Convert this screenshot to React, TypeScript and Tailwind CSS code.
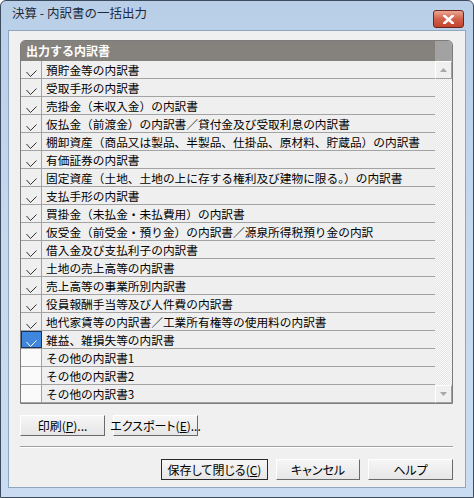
import React from "react";

const items: { label: string; checked: boolean; selected?: boolean }[] = [
  { label: "預貯金等の内訳書", checked: true },
  { label: "受取手形の内訳書", checked: true },
  { label: "売掛金（未収入金）の内訳書", checked: true },
  { label: "仮払金（前渡金）の内訳書／貸付金及び受取利息の内訳書", checked: true },
  { label: "棚卸資産（商品又は製品、半製品、仕掛品、原材料、貯蔵品）の内訳書", checked: true },
  { label: "有価証券の内訳書", checked: true },
  { label: "固定資産（土地、土地の上に存する権利及び建物に限る。）の内訳書", checked: true },
  { label: "支払手形の内訳書", checked: true },
  { label: "買掛金（未払金・未払費用）の内訳書", checked: true },
  { label: "仮受金（前受金・預り金）の内訳書／源泉所得税預り金の内訳", checked: true },
  { label: "借入金及び支払利子の内訳書", checked: true },
  { label: "土地の売上高等の内訳書", checked: true },
  { label: "売上高等の事業所別内訳書", checked: true },
  { label: "役員報酬手当等及び人件費の内訳書", checked: true },
  { label: "地代家賃等の内訳書／工業所有権等の使用料の内訳書", checked: true },
  { label: "雑益、雑損失等の内訳書", checked: true, selected: true },
  { label: "その他の内訳書1", checked: false },
  { label: "その他の内訳書2", checked: false },
  { label: "その他の内訳書3", checked: false },
];

const font = { fontFamily: '"Noto Sans CJK JP", "Liberation Sans", sans-serif' };

function Check({ color }: { color: string }) {
  return (
    <svg width="11" height="7" viewBox="0 0 11 7" className="absolute left-[5px] top-[9px]">
      <polyline points="0.5,2 4.5,6.5 10.5,0.5" fill="none" stroke={color} strokeWidth="1" />
    </svg>
  );
}

function Button({
  children,
  width,
  isDefault,
}: {
  children: React.ReactNode;
  width: string;
  isDefault?: boolean;
}) {
  return (
    <div
      className={`${width} h-[21px] flex items-center justify-center whitespace-nowrap text-[12px] leading-none text-black [font-feature-settings:'palt'] bg-gradient-to-b from-[#f6f6f6] to-[#e6e6e6] border ${
        isDefault
          ? "border-[#2a2a2a]"
          : "border-t-white border-l-white border-r-[#6a6a6a] border-b-[#6a6a6a]"
      }`}
    >
      {children}
    </div>
  );
}

function ArrowButton({ up }: { up?: boolean }) {
  return (
    <div className="h-[18px] w-full flex items-center justify-center bg-[#f0f0f0] border border-t-white border-l-white border-r-[#a0a0a0] border-b-[#a0a0a0]">
      <svg width="7" height="4" viewBox="0 0 7 4">
        {up ? (
          <polygon points="0,4 7,4 3.5,0" fill="#a8a8a8" />
        ) : (
          <polygon points="0,0 7,0 3.5,4" fill="#a8a8a8" />
        )}
      </svg>
    </div>
  );
}

export default function App() {
  return (
    <div
      className="w-[474px] h-[498px] rounded-t-[6px] border border-[#3c4c5e] bg-gradient-to-b from-[#b9cfe8] via-[#c6d9ef] to-[#cadcf1] flex flex-col overflow-hidden"
      style={font}
    >
      {/* title bar */}
      <div className="h-[29px] flex items-start justify-between shrink-0">
        <div className="pl-[11px] pt-[6px] text-[12.5px] text-[#1e2a3a] leading-none">決算 - 内訳書の一括出力</div>
        <div className="mt-[9px] mr-[9px] w-[31px] h-[18px] rounded-[3px] border border-[#6e261b] bg-gradient-to-b from-[#e9a592] via-[#d2614b] to-[#c2432d] flex items-center justify-center">
          <svg width="11" height="9" viewBox="0 0 11 9">
            <path d="M1 0.5 L10 8.5 M10 0.5 L1 8.5" stroke="#fff" strokeWidth="2.6" strokeLinecap="square" />
          </svg>
        </div>
      </div>

      {/* client area */}
      <div className="mx-[7px] h-[458px] bg-[#f0f0f0] border border-[#8fa6c0] flex flex-col pt-[9px] pl-[11px] pr-[12px] text-black">
        {/* list panel */}
        <div className="w-[433px] h-[364px] border border-[#7c7c7c] rounded-t-[5px] overflow-hidden flex flex-col bg-[#efefef]">
          <div className="h-[20px] flex shrink-0">
            <div className="flex-1 bg-[#85827e] text-white font-bold text-[12px] leading-[20px] pl-[5px]">
              出力する内訳書
            </div>
            <div className="w-[17px] bg-[#a2a2a2]" />
          </div>
          <div className="flex flex-1 min-h-0">
            <div className="flex-1 flex flex-col">
              {items.map((it) => (
                <div key={it.label} className="h-[18px] flex border-b border-[#a3a3a3] shrink-0">
                  <div
                    className={`relative w-[21px] shrink-0 border-r border-[#a3a3a3] ${
                      it.selected
                        ? "bg-[#3f86dc] outline outline-1 outline-[#17335a] -outline-offset-1"
                        : it.checked
                        ? "bg-[#efefef]"
                        : "bg-[#fafafa]"
                    }`}
                  >
                    {it.checked && <Check color={it.selected ? "#ffffff" : "#303030"} />}
                  </div>
                  <div className="flex-1 pl-[4px] text-[11.7px] leading-[18px] whitespace-nowrap overflow-hidden">
                    {it.label}
                  </div>
                </div>
              ))}
            </div>
            <div className="w-[17px] flex flex-col shrink-0">
              <ArrowButton up />
              <div className="flex-1 bg-[repeating-conic-gradient(#e4e4e4_0_25%,#fbfbfb_0_50%)] bg-[length:2px_2px]" />
              <ArrowButton />
            </div>
          </div>
        </div>

        {/* export buttons */}
        <div className="flex gap-[8px] mt-[11px]">
          <Button width="w-[85px]">
            印刷(<span className="underline">P</span>)...
          </Button>
          <Button width="w-[85px]">
            エクスポート(<span className="underline">E</span>)...
          </Button>
        </div>

        {/* separator */}
        <div className="mt-[10px] w-[433px] h-[2px] border-t border-[#a0a0a0] border-b border-b-white" />

        {/* bottom buttons */}
        <div className="flex justify-end gap-[8px] mt-[11px] w-[433px]">
          <Button width="w-[107px]" isDefault>
            保存して閉じる(<span className="underline">C</span>)
          </Button>
          <Button width="w-[84px]">キャンセル</Button>
          <Button width="w-[85px]">ヘルプ</Button>
        </div>
      </div>
    </div>
  );
}
